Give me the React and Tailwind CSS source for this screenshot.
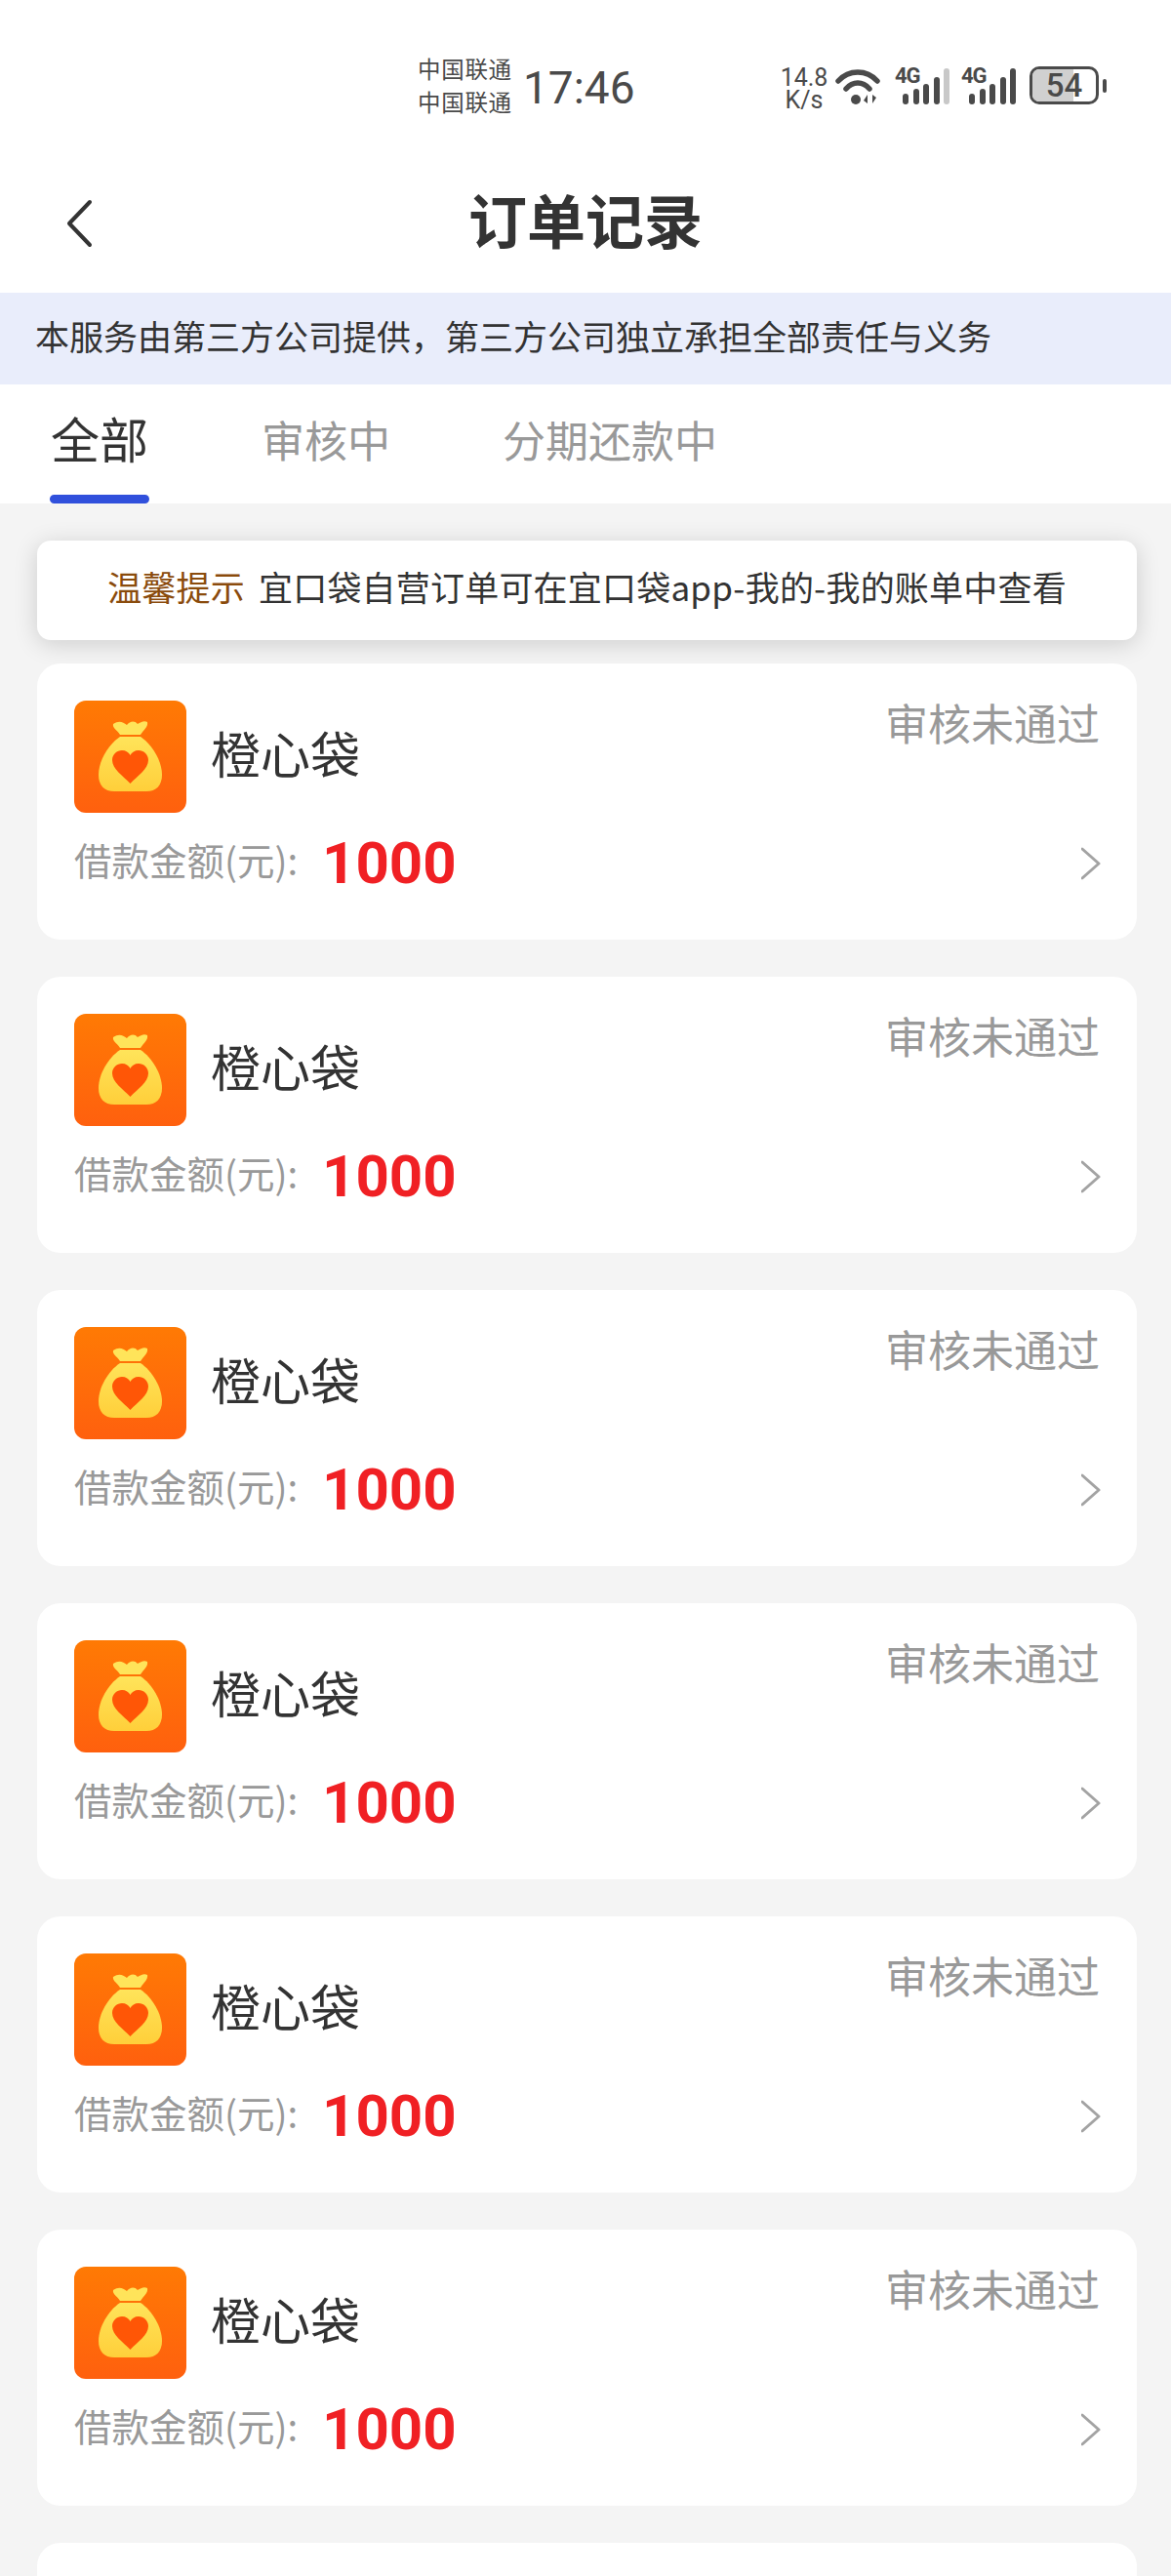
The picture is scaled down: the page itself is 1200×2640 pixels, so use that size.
// App.jsx
const CJK = "font-['Noto_Sans_CJK_SC','Noto_Sans',sans-serif]"

function SignalIcon({ dimLast = false }) {
  const bars = [
    { h: "h-[11px]", c: "bg-[#4a4a4a]" },
    { h: "h-[16px]", c: "bg-[#4a4a4a]" },
    { h: "h-[21px]", c: "bg-[#4a4a4a]" },
    { h: "h-[28px]", c: "bg-[#4a4a4a]" },
    { h: "h-[37px]", c: dimLast ? "bg-[#c8c8c8]" : "bg-[#4a4a4a]" },
  ]
  return (
    <div className="relative h-[37px] w-[56px]">
      <span className="absolute left-0 top-[-3px] font-['Roboto',sans-serif] text-[22px] font-bold leading-[22px] tracking-[-1px] text-[#4a4a4a]">
        4G
      </span>
      <div className="absolute bottom-0 right-0 flex items-end gap-[4.5px]">
        {bars.map((b, i) => (
          <span key={i} className={`w-[6px] rounded-full ${b.h} ${b.c}`} />
        ))}
      </div>
    </div>
  )
}

function StatusBar() {
  return (
    <div className="flex h-[180px] items-start bg-white pl-[428px] pt-[53px] text-[#4a4a4a]">
      <div className={`${CJK} w-[108px] text-[23.5px] leading-[34px] tracking-[0.7px]`}>
        <div>中国联通</div>
        <div>中国联通</div>
      </div>
      <div className="mt-[9px] w-[120px] font-['Roboto',sans-serif] text-[46px] leading-[56px]">17:46</div>
      <div className="ml-[142px] mt-[15px] flex items-start">
        <div className="flex w-[52px] flex-col items-center font-['Roboto',sans-serif] text-[25px] leading-[23px]">
          <span>14.8</span>
          <span>K/s</span>
        </div>
        <svg className="ml-[6px] mt-[2px]" width="46" height="37" viewBox="0 0 46 37" fill="none">
          <path d="M3 13 C14 1 32 1 43 13" stroke="#4a4a4a" strokeWidth="5.5" strokeLinecap="round" />
          <path d="M11 21 C18 13 28 13 35 21" stroke="#4a4a4a" strokeWidth="5.5" strokeLinecap="round" />
          <circle cx="21" cy="32" r="5" fill="#4a4a4a" />
          <path d="M33 27 L33 36 L29 33 Z M38 27 L38 36 L42 30 Z" fill="#4a4a4a" />
        </svg>
        <div className="ml-[15px] mt-[2px] flex gap-[12px]">
          <SignalIcon dimLast />
          <SignalIcon />
        </div>
        <div className="ml-[14px] flex items-center">
          <div className="relative flex h-[39px] w-[71px] items-center justify-center overflow-hidden rounded-[10px] border-[3px] border-[#4a4a4a]">
            <span className="absolute inset-y-0 left-0 w-[42px] bg-[#d0d0d0]" />
            <span className="relative font-['Roboto',sans-serif] text-[33px] font-medium leading-none">54</span>
          </div>
          <span className="ml-[4px] h-[14px] w-[4px] rounded-full bg-[#4a4a4a]" />
        </div>
      </div>
    </div>
  )
}

function NavBar() {
  return (
    <div className="relative flex h-[120px] items-start justify-center bg-white">
      <svg className="absolute left-[66px] top-[24px]" width="32" height="50" viewBox="0 0 32 50" fill="none">
        <path d="M26 3 L5 25 L26 47" stroke="#333333" strokeWidth="4" strokeLinecap="round" strokeLinejoin="round" />
      </svg>
      <h1 className={`${CJK} mt-[13px] text-[60px] font-bold leading-[62px] text-[#333333]`}>订单记录</h1>
    </div>
  )
}

function Tabs() {
  return (
    <div className={`${CJK} relative flex h-[122px] items-start bg-white pl-[52px] pt-[25px]`}>
      <span className="w-[216px] text-[50px] leading-[58px] text-[#333333]">全部</span>
      <span className="w-[247px] text-[44px] leading-[62px] text-[#999999]">审核中</span>
      <span className="text-[44px] leading-[62px] text-[#999999]">分期还款中</span>
      <span className="absolute bottom-0 left-[51px] h-[9px] w-[102px] rounded-full bg-[#3050dc]" />
    </div>
  )
}

function BagIcon({ id }) {
  return (
    <svg width="115" height="115" viewBox="0 0 115 115" className="shrink-0">
      <defs>
        <linearGradient id={`bg-${id}`} x1="0" y1="0" x2="0" y2="1">
          <stop offset="0" stopColor="#ff7a04" />
          <stop offset="1" stopColor="#ff600e" />
        </linearGradient>
        <linearGradient id={`bag-${id}`} x1="0" y1="0" x2="0" y2="1">
          <stop offset="0" stopColor="#ffe45a" />
          <stop offset="1" stopColor="#ffcf3a" />
        </linearGradient>
      </defs>
      <rect width="115" height="115" rx="12" fill={`url(#bg-${id})`} />
      <path
        d="M40 24 C46 20 50 22 54 25 C57 21 62 20 65 24 C68 22 72 20 75 22 C76 27 71 30 68 35 L47 35 C44 30 39 28 40 24 Z"
        fill="#ffe45a"
      />
      <path
        d="M47 37 L68 37 C80 45 90 62 90 76 C90 87 84 93 74 93 L41 93 C31 93 25 87 25 76 C25 62 35 45 47 37 Z"
        fill={`url(#bag-${id})`}
      />
      <path
        d="M57.5 85 C50 77 39 70 39 61 C39 55 44 51 49 51 C53 51 56 53 57.5 56 C59 53 62 51 66 51 C71 51 76 55 76 61 C76 70 65 77 57.5 85 Z"
        fill="#ff5606"
      />
    </svg>
  )
}

function OrderCard({ id }) {
  return (
    <article className="h-[283px] shrink-0 rounded-[24px] bg-white pl-[38px] pr-[36px] pt-[38px]">
      <div className="flex items-start justify-between">
        <div className="flex items-center">
          <BagIcon id={id} />
          <span className={`${CJK} mb-[10px] ml-[25px] text-[51px] leading-[60px] text-[#333333]`}>橙心袋</span>
        </div>
        <span className={`${CJK} mr-[2px] text-[44px] leading-[44px] text-[#999999]`}>审核未通过</span>
      </div>
      <div className="mt-[20px] flex h-[60px] items-start justify-between">
        <div className="flex items-start">
          <span className={`${CJK} h-[54px] w-[254px] text-[38.5px] leading-[54px] text-[#999999]`}>借款金额(元):</span>
          <span className="mt-[2px] font-['Roboto',sans-serif] text-[60px] font-bold leading-[60px] text-[#f02024]">1000</span>
        </div>
        <svg className="mt-[15px]" width="21" height="34" viewBox="0 0 21 34" fill="none">
          <path d="M1 2 L18 17 L1 32" stroke="#a3a3a3" strokeWidth="3" strokeLinecap="round" strokeLinejoin="round" />
        </svg>
      </div>
    </article>
  )
}

export default function App() {
  const cards = [1, 2, 3, 4, 5, 6, 7]
  return (
    <div className="h-[2640px] w-[1200px] overflow-hidden bg-[#f4f4f4]">
      <StatusBar />
      <NavBar />
      <div className={`${CJK} flex h-[94px] items-center bg-[#e9edfb] pb-[5px] pl-[36px] text-[35px] text-[#333333]`}>
        本服务由第三方公司提供，第三方公司独立承担全部责任与义务
      </div>
      <Tabs />
      <main className="flex flex-col pl-[38px] pr-[35px] pt-[38px]">
        <div className={`${CJK} mb-[24px] flex h-[102px] items-center justify-center rounded-[14px] bg-white pb-[7px] text-[35px] tracking-[0.2px] text-[#333333] shadow-[0_4px_24px_rgba(0,0,0,0.16)]`}>
          <span className="mr-[14px] text-[#8a4b0c]">温馨提示</span>
          宜口袋自营订单可在宜口袋app-我的-我的账单中查看
        </div>
        <div className="flex flex-col gap-[38px]">
          {cards.map((c) => (
            <OrderCard key={c} id={c} />
          ))}
        </div>
      </main>
    </div>
  )
}
